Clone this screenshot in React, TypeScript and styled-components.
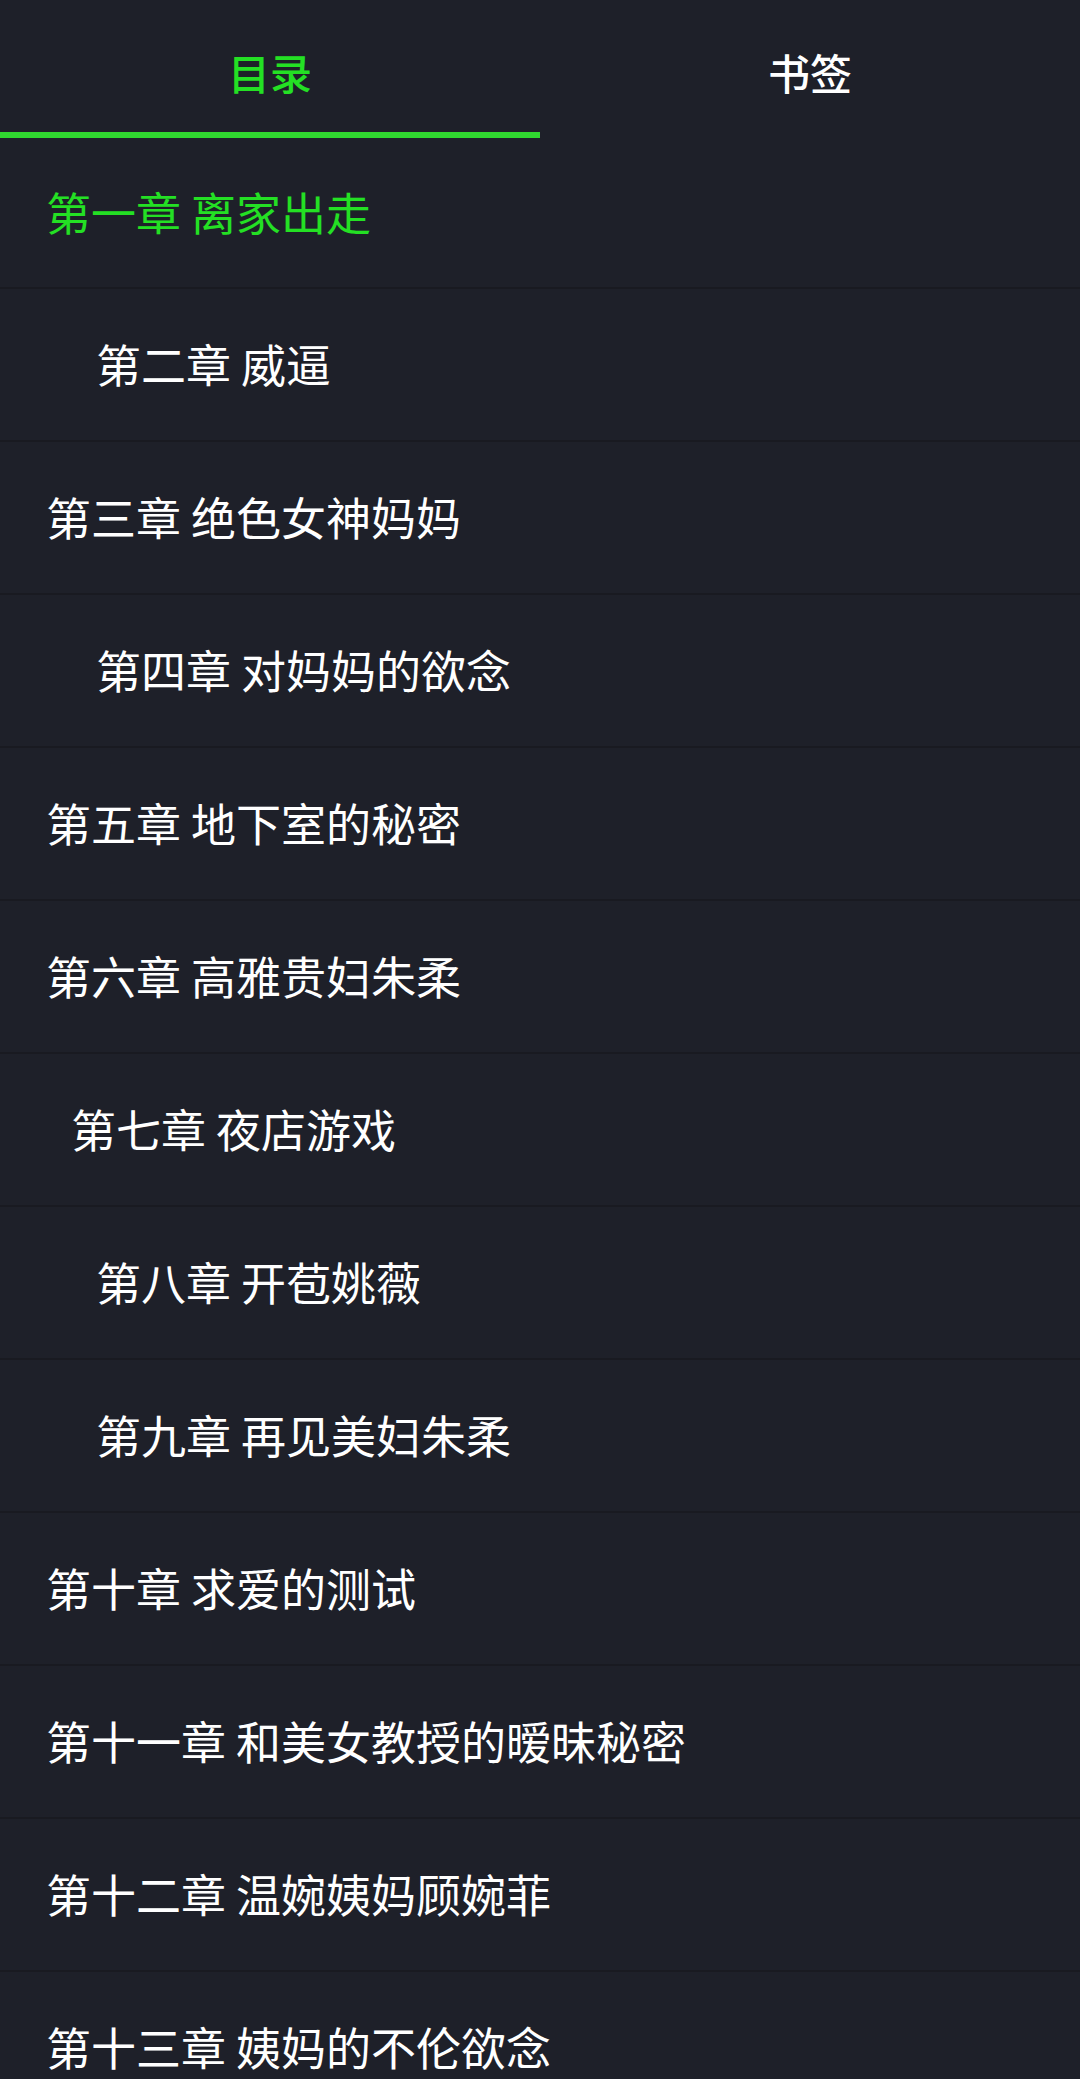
import React, { useState } from 'react';
import styled, { createGlobalStyle } from 'styled-components';

const BG = '#1e2029';
const DIVIDER = '#191a21';
const GREEN = '#24e024';
const UNDERLINE = '#30d830';
const TEXT = '#ffffff';

const GlobalStyle = createGlobalStyle`
  html, body {
    margin: 0;
    padding: 0;
    background: ${BG};
    overflow: hidden;
  }
  body {
    font-family: "Noto Sans CJK SC", "Noto Sans", sans-serif;
    -webkit-font-smoothing: antialiased;
  }
`;

interface Chapter {
  title: string;
  indent?: number;
}

const chapters: Chapter[] = [
  { title: '第一章 离家出走' },
  { title: '第二章 威逼', indent: 2 },
  { title: '第三章 绝色女神妈妈' },
  { title: '第四章 对妈妈的欲念', indent: 2 },
  { title: '第五章 地下室的秘密' },
  { title: '第六章 高雅贵妇朱柔' },
  { title: '第七章 夜店游戏', indent: 1 },
  { title: '第八章 开苞姚薇', indent: 2 },
  { title: '第九章 再见美妇朱柔', indent: 2 },
  { title: '第十章 求爱的测试' },
  { title: '第十一章 和美女教授的暧昧秘密' },
  { title: '第十二章 温婉姨妈顾婉菲' },
  { title: '第十三章 姨妈的不伦欲念' },
];

const Screen = styled.div`
  width: 100%;
  height: 100vh;
  display: flex;
  flex-direction: column;
  background: ${BG};
  overflow: hidden;
`;

const TabBar = styled.div`
  display: flex;
  flex-shrink: 0;
  height: 138px;
`;

const Tab = styled.button<{ $active: boolean }>`
  flex: 1;
  display: flex;
  align-items: center;
  justify-content: center;
  padding: 10px 0 0;
  margin: 0;
  border: none;
  border-bottom: 6px solid ${(p) => (p.$active ? UNDERLINE : 'transparent')};
  background: transparent;
  color: ${(p) => (p.$active ? GREEN : TEXT)};
  font-family: inherit;
  font-size: 42px;
  font-weight: 500;
  cursor: pointer;
`;

const ChapterList = styled.ul`
  list-style: none;
  margin: 0;
  padding: 0;
`;

const ChapterRow = styled.li<{ $indent: number; $current: boolean }>`
  display: flex;
  align-items: center;
  height: 153px;
  padding: 0 46px 3px ${(p) => 46 + p.$indent * 25}px;
  box-sizing: border-box;
  border-bottom: 2px solid ${DIVIDER};
  color: ${(p) => (p.$current ? GREEN : TEXT)};
  font-size: 45px;
  white-space: nowrap;

  &:first-child {
    height: 151px;
  }
`;

const App: React.FC = () => {
  const [tab, setTab] = useState(0);
  return (
    <>
      <GlobalStyle />
      <Screen>
        <TabBar>
          <Tab $active={tab === 0} onClick={() => setTab(0)}>
            目录
          </Tab>
          <Tab $active={tab === 1} onClick={() => setTab(1)}>
            书签
          </Tab>
        </TabBar>
        <ChapterList>
          {chapters.map((c, i) => (
            <ChapterRow key={c.title} $indent={c.indent ?? 0} $current={i === 0}>
              {c.title}
            </ChapterRow>
          ))}
        </ChapterList>
      </Screen>
    </>
  );
};

export default App;
